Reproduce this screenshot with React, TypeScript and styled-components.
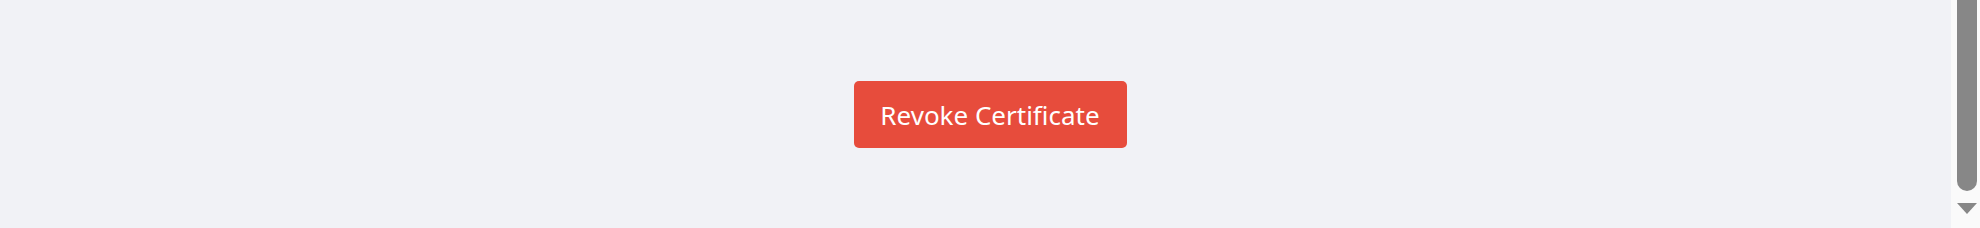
import styled, { createGlobalStyle } from "styled-components";

const GlobalStyle = createGlobalStyle`
  html, body {
    margin: 0;
    padding: 0;
    background: #f1f2f6;
    overflow: hidden;
  }
`;

export default function App() {
  return (
    <>
      <GlobalStyle />
      <Page>
        <RevokeButton type="button">Revoke Certificate</RevokeButton>
        <ScrollTrack>
          <ScrollThumb />
          <ScrollArrow />
        </ScrollTrack>
      </Page>
    </>
  );
}

const Page = styled.div`
  position: relative;
  width: 1980px;
  height: 228px;
  display: flex;
  align-items: center;
  justify-content: center;
  background: #f1f2f6;
`;

const RevokeButton = styled.button`
  width: 273px;
  height: 67px;
  padding: 2px 0 0;
  border: none;
  border-radius: 5px;
  background: #e74c3c;
  color: #fff;
  font-family: "Noto Sans", "Open Sans", sans-serif;
  font-size: 26px;
  cursor: pointer;
`;

const ScrollTrack = styled.div`
  position: absolute;
  top: 0;
  right: 0;
  width: 29px;
  height: 228px;
  background: #fafafa;
  display: flex;
  flex-direction: column;
  align-items: center;
  padding-left: 6px;
  padding-right: 3px;
  box-sizing: border-box;
`;

const ScrollThumb = styled.div`
  width: 20px;
  height: 191px;
  background: #878787;
  border-radius: 0 0 10px 10px;
`;

const ScrollArrow = styled.div`
  margin-top: 12px;
  width: 0;
  height: 0;
  border-left: 10px solid transparent;
  border-right: 10px solid transparent;
  border-top: 11px solid #878787;
`;
